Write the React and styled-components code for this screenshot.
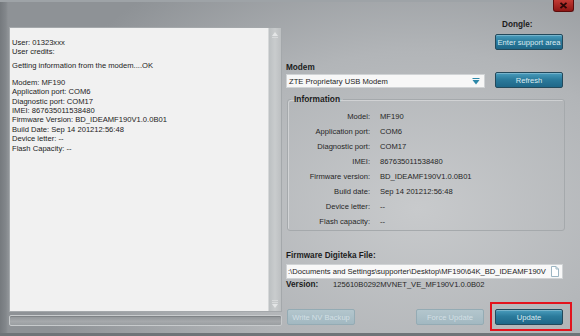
import React from "react";
import styled, { createGlobalStyle } from "styled-components";

const logLines = [
  { text: "User: 01323xxx" },
  { text: "User credits:" },
  { text: "Getting information from the modem....OK", gap: 4.6 },
  { text: "Modem: MF190", gap: 7.6 },
  { text: "Application port: COM6" },
  { text: "Diagnostic port: COM17" },
  { text: "IMEI: 867635011538480" },
  { text: "Firmware Version: BD_IDEAMF190V1.0.0B01" },
  { text: "Build Date: Sep 14 201212:56:48" },
  { text: "Device letter: --" },
  { text: "Flash Capacity: --" },
];

const infoRows = [
  ["Model:", "MF190"],
  ["Application port:", "COM6"],
  ["Diagnostic port:", "COM17"],
  ["IMEI:", "867635011538480"],
  ["Firmware version:", "BD_IDEAMF190V1.0.0B01"],
  ["Build date:", "Sep 14 201212:56:48"],
  ["Device letter:", "--"],
  ["Flash capacity:", "--"],
];

const App = () => {
  return (
    <>
      <GlobalStyle />
      <StWindow>
        <StCloseButton>
          <svg width="9" height="7" viewBox="0 0 9 7">
            <path d="M1.5 0.8 L7.5 6.2 M7.5 0.8 L1.5 6.2" stroke="#2a0606" strokeWidth="1.8" />
          </svg>
        </StCloseButton>

        <StLeftColumn>
          <StLog>
            <StLogText>
              {logLines.map((line, i) => (
                <StLogLine key={i} $gap={line.gap}>
                  {line.text}
                </StLogLine>
              ))}
            </StLogText>
            <StScrollbar>
              <svg width="8" height="8" viewBox="0 0 8 8">
                <path d="M4 1 L7 5 L1 5 Z" fill="#e4e6e7" />
                <path d="M1 6.5 H7" stroke="#d8dadb" strokeWidth="1" />
              </svg>
              <svg width="8" height="10" viewBox="0 0 8 10">
                <path d="M1 1.5 H7 M1 3.5 H7" stroke="#d8dadb" strokeWidth="1" />
                <path d="M1 5 L7 5 L4 9 Z" fill="#e4e6e7" />
              </svg>
            </StScrollbar>
          </StLog>
          <StProgress />
        </StLeftColumn>

        <StRightColumn>
          <StDongleBlock>
            <StDongleLabel>Dongle:</StDongleLabel>
            <StButton>Enter support area</StButton>
          </StDongleBlock>

          <StBoldLabel $top={13}>Modem</StBoldLabel>
          <StComboRow>
            <StCombo>
              <StComboText>ZTE Proprietary USB Modem</StComboText>
              <svg width="8" height="7" viewBox="0 0 8 7">
                <path d="M0.5 0.5 H7.5" stroke="#2b87a8" strokeWidth="1" />
                <path d="M0.5 2 L7.5 2 L4 6.5 Z" fill="#2b87a8" />
              </svg>
            </StCombo>
            <StButton>Refresh</StButton>
          </StComboRow>

          <StGroup>
            <StLegend>Information</StLegend>
            <StInfoGrid>
              {infoRows.map(([label, value]) => (
                <React.Fragment key={label}>
                  <StInfoLabel>{label}</StInfoLabel>
                  <StInfoValue>{value}</StInfoValue>
                </React.Fragment>
              ))}
            </StInfoGrid>
          </StGroup>

          <StBoldLabel $top={20} $height={10}>Firmware Digiteka File:</StBoldLabel>
          <StFileInput>
            <StFilePath>:\Documents and Settings\supporter\Desktop\MF190\64K_BD_IDEAMF190V</StFilePath>
            <svg width="8" height="11" viewBox="0 0 8 11">
              <path d="M0.5 0.5 H5 L7.5 3 V10.5 H0.5 Z" fill="#ffffff" stroke="#9db6c3" strokeWidth="1" />
              <path d="M5 0.5 V3 H7.5" fill="none" stroke="#9db6c3" strokeWidth="1" />
            </svg>
          </StFileInput>

          <StVersionRow>
            <StVersionLabel>Version:</StVersionLabel>
            <span>125610B0292MVNET_VE_MF190V1.0.0B02</span>
          </StVersionRow>

          <StButtonRow>
            <StButton disabled>Write NV Backup</StButton>
            <StButton disabled $push>Force Update</StButton>
            <StHighlight>
              <StButton>Update</StButton>
            </StHighlight>
          </StButtonRow>
        </StRightColumn>
      </StWindow>
    </>
  );
};

export default App;

const GlobalStyle = createGlobalStyle`
  html, body {
    margin: 0;
    padding: 0;
    background: #8f9397;
  }
  body {
    font-family: "Liberation Sans", Arial, sans-serif;
    font-size: 7.6px;
    color: #1c1c1c;
  }
`;

const StWindow = styled.div`
  position: relative;
  width: 580px;
  height: 336px;
  box-sizing: border-box;
  padding-left: 9px;
  display: grid;
  grid-template-columns: 273px 279px;
  column-gap: 4px;
  align-items: start;
  overflow: hidden;
  background:
    linear-gradient(90deg, rgba(70, 75, 80, 0.35) 0px, rgba(70, 75, 80, 0.15) 6px, rgba(0, 0, 0, 0) 8px),
    radial-gradient(ellipse 70% 85% at 72% 62%, #c8cacc 0%, #b2b5b8 55%, #8e9296 100%);
  box-shadow:
    inset 0 -3px 0 #6f7478,
    inset 0 2px 0 #9ea3a7;
`;

const StCloseButton = styled.div`
  position: absolute;
  top: 0;
  right: 6px;
  width: 21px;
  height: 12px;
  box-sizing: border-box;
  display: flex;
  align-items: center;
  justify-content: center;
  border: 1px solid #5c0c0c;
  border-top: none;
  border-radius: 0 0 3px 3px;
  background: linear-gradient(#c23a34, #8e1614);
`;

const StLeftColumn = styled.div`
  padding-top: 27px;
  display: flex;
  flex-direction: column;
`;

const StLog = styled.div`
  height: 285px;
  box-sizing: border-box;
  display: flex;
  border: 1px solid #a4a8ab;
  background: #f1f1f1;
`;

const StLogText = styled.div`
  flex: 1;
  padding: 9.5px 0 0 2px;
`;

const StLogLine = styled.div`
  line-height: 9.4px;
  height: 9.4px;
  white-space: nowrap;
  margin-top: ${(props) => props.$gap || 0}px;
`;

const StScrollbar = styled.div`
  width: 12px;
  display: flex;
  flex-direction: column;
  align-items: center;
  justify-content: space-between;
  padding: 3px 0 2px;
  background: linear-gradient(90deg, #bcc0c2, #c9cccd 50%, #bcbfc1);
  border-left: 1px solid #d6d8d9;
`;

const StProgress = styled.div`
  margin-top: 3px;
  height: 11px;
  box-sizing: border-box;
  border: 1px solid #c8cbcd;
  border-radius: 2px;
  background: linear-gradient(#8f9396, #a6a9ac 60%, #9a9ea1);
  box-shadow: inset 0 1px 0 #7f8386;
`;

const StRightColumn = styled.div`
  padding-top: 20px;
  display: flex;
  flex-direction: column;
`;

const StDongleBlock = styled.div`
  align-self: flex-end;
  margin-right: 2px;
  width: 68px;
  display: flex;
  flex-direction: column;
  gap: 4px;
`;

const StDongleLabel = styled.div`
  height: 10px;
  line-height: 10px;
  padding-left: 7px;
  font-weight: 700;
  font-size: 8.2px;
`;

const StBoldLabel = styled.div`
  margin-top: ${(props) => props.$top}px;
  height: ${(props) => props.$height || 9}px;
  line-height: ${(props) => props.$height || 9}px;
  font-weight: 700;
  font-size: 8.2px;
`;

const StButton = styled.button`
  width: 68px;
  height: 16px;
  padding: 0;
  margin: 0 0 0 ${(props) => (props.$push ? "auto" : "0")};
  box-sizing: border-box;
  font-family: inherit;
  font-size: 7.6px;
  color: #dcebf1;
  border: 1px solid #23495b;
  border-radius: 2px;
  background: linear-gradient(#4a9dbd, #2b7b9c 45%, #1f6788);
  box-shadow: inset 0 1px 0 rgba(255, 255, 255, 0.25);
  cursor: pointer;
  white-space: nowrap;

  &:disabled {
    color: #d2dfe4;
    border-color: #94abb4;
    background: linear-gradient(#b3c6cd, #a2b8c1);
    box-shadow: none;
    cursor: default;
  }
`;

const StComboRow = styled.div`
  height: 16px;
  display: flex;
  align-items: flex-end;
  gap: 10px;
`;

const StCombo = styled.div`
  width: 199px;
  height: 14px;
  box-sizing: border-box;
  display: flex;
  align-items: center;
  padding: 0 4px 0 2px;
  background: #f7f7f7;
  border: 1px solid #d0d3d5;
`;

const StComboText = styled.span`
  flex: 1;
  white-space: nowrap;
`;

const StGroup = styled.fieldset`
  margin: 6px 0 0 1px;
  padding: 4.5px 0 1.5px;
  width: 278px;
  box-sizing: border-box;
  border: 1px solid #a5a9ac;
  border-radius: 3px;
  box-shadow: inset 1px 1px 0 rgba(255, 255, 255, 0.35);
`;

const StLegend = styled.legend`
  margin-left: 3px;
  padding: 0 3px;
  height: 10px;
  line-height: 10px;
  font-weight: 700;
  font-size: 8.4px;
`;

const StInfoGrid = styled.div`
  display: grid;
  grid-template-columns: 82px 1fr;
  column-gap: 10px;
  grid-auto-rows: 15px;
  align-items: center;
  color: #262626;
`;

const StInfoLabel = styled.span`
  text-align: right;
  white-space: nowrap;
`;

const StInfoValue = styled.span`
  white-space: nowrap;
`;

const StFileInput = styled.div`
  margin-top: 3px;
  width: 277px;
  height: 15px;
  box-sizing: border-box;
  display: flex;
  align-items: center;
  gap: 4px;
  padding: 0 3px 0 1px;
  background: #f8f8f8;
  border: 1px solid #d0d3d5;
`;

const StFilePath = styled.div`
  flex: 1;
  white-space: nowrap;
`;

const StVersionRow = styled.div`
  margin-top: 1px;
  height: 9px;
  line-height: 9px;
  display: flex;
  color: #262626;
`;

const StVersionLabel = styled.span`
  width: 47px;
  font-weight: 700;
  font-size: 8.2px;
  color: #1c1c1c;
`;

const StButtonRow = styled.div`
  margin-top: 20px;
  padding: 0 2px 0 1px;
  display: flex;
  align-items: center;
`;

const StHighlight = styled.div`
  position: relative;
  margin-left: 11px;

  &::after {
    content: "";
    position: absolute;
    top: -7px;
    right: -9px;
    bottom: -6px;
    left: -5px;
    border: 2px solid #e3131d;
    pointer-events: none;
  }
`;
